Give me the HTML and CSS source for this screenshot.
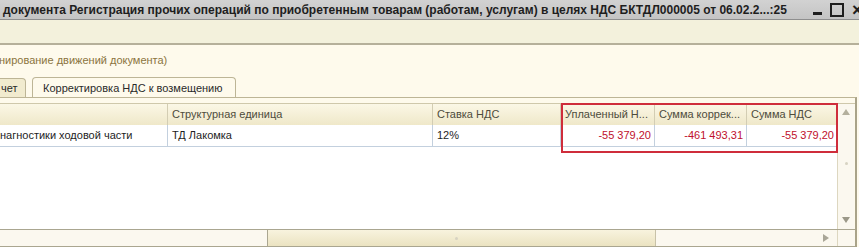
FILE: index.html
```html
<!DOCTYPE html>
<html lang="ru">
<head>
    <meta charset="UTF-8">
    <title>Регистрация прочих операций</title>
    <link rel="stylesheet" href="styles.css">
</head>
<body>
    <div class="window">
        <div class="titlebar">
            <span class="title">документа Регистрация прочих операций по приобретенным товарам (работам, услугам) в целях НДС БКТДЛ000005 от 06.02.2...:25</span>
            <div class="controls">
                <span class="ctl-min"></span>
                <span class="ctl-max"></span>
                <span class="ctl-close">×</span>
            </div>
        </div>
        <div class="toolbar"></div>
        <div class="form">
            <div class="hint">нирование движений документа)</div>
            <div class="tabs">
                <div class="tab">чет</div>
                <div class="tab active">Корректировка НДС к возмещению</div>
            </div>
        </div>
        <div class="panel">
            <div class="grid-wrap">
                <div class="grid">
                    <div class="row head">
                        <div class="cell c1"></div>
                        <div class="cell c2">Структурная единица</div>
                        <div class="cell c3">Ставка НДС</div>
                        <div class="cell c4">Уплаченный Н...</div>
                        <div class="cell c5">Сумма коррек...</div>
                        <div class="cell c6">Сумма НДС</div>
                    </div>
                    <div class="row data">
                        <div class="cell c1">нагностики ходовой части</div>
                        <div class="cell c2">ТД Лакомка</div>
                        <div class="cell c3">12%</div>
                        <div class="cell c4 num">-55 379,20</div>
                        <div class="cell c5 num">-461 493,31</div>
                        <div class="cell c6 num">-55 379,20</div>
                    </div>
                    <div class="grid-body"></div>
                </div>
                <div class="vscroll">
                    <span class="arrow up"></span>
                    <span class="vthumb"><span class="grip"></span></span>
                    <span class="arrow down"></span>
                </div>
            </div>
            <div class="hscroll">
                <div class="hleft"></div>
                <div class="hthumb"><span class="grip"></span></div>
                <div class="hright"><span class="arrow right"></span></div>
                <div class="corner"></div>
            </div>
            <div class="mark"></div>
        </div>
    </div>
</body>
</html>
```

FILE: styles.css
```css
body {
    margin: 0;
    width: 859px;
    height: 247px;
    overflow: hidden;
    font-family: "Liberation Sans", Arial, sans-serif;
    font-size: 11px;
    background-color: #fefaec;
}
.window {
    display: flex;
    flex-direction: column;
    height: 247px;
}
.titlebar {
    height: 20px;
    display: flex;
    align-items: center;
    justify-content: space-between;
    background: linear-gradient(#d2d2d2, #c4c4c4);
    border-bottom: 1px solid #8e8e8e;
    box-sizing: border-box;
}
.title {
    font-weight: bold;
    font-size: 12px;
    color: #1e1e1e;
    padding-left: 3px;
    white-space: nowrap;
}
.controls {
    display: flex;
    align-items: center;
    gap: 8px;
    width: 46px;
    overflow: hidden;
}
.ctl-min {
    flex: none;
    width: 9px;
    height: 3px;
    background: #1e1e1e;
    margin-top: 8px;
}
.ctl-max {
    flex: none;
    width: 10px;
    height: 10px;
    border: 2px solid #1e1e1e;
}
.ctl-close {
    flex: none;
    font-size: 18px;
    font-weight: bold;
    color: #1e1e1e;
    line-height: 14px;
}
.toolbar {
    height: 25px;
    background: #f3f1dc;
    border-bottom: 2px solid #b5b09a;
    box-sizing: border-box;
}
.form {
    height: 52px;
    display: flex;
    flex-direction: column;
    justify-content: space-between;
    background: #fefaec;
}
.hint {
    color: #8b7440;
    padding-top: 9px;
    margin-left: -1px;
}
.tabs {
    display: flex;
    align-items: flex-end;
    gap: 6px;
    margin-left: -1px;
}
.tab {
    height: 19px;
    line-height: 19px;
    width: 27px;
    box-sizing: border-box;
    padding-left: 1px;
    background: #f1ebcf;
    border: 1px solid #bdb596;
    border-bottom: none;
    border-radius: 0 4px 0 0;
    color: #2a2a2a;
}
.tab.active {
    width: 204px;
    height: 20px;
    line-height: 21px;
    padding-left: 10px;
    background: #fefaec;
    border-radius: 4px 4px 0 0;
}
.panel {
    position: relative;
    flex: 1;
    border-top: 1px solid #bdb596;
    border-right: 2px solid #a9a389;
    margin-right: 2px;
    padding-top: 5px;
    display: flex;
    flex-direction: column;
}
.grid-wrap {
    flex: 1;
    display: flex;
    border-top: 1px solid #cfc8ab;
}
.grid {
    width: 837px;
    display: flex;
    flex-direction: column;
    background: #ffffff;
}
.row {
    display: flex;
    height: 21px;
}
.row.head {
    background: linear-gradient(#fbf7e6, #efe8c9);
    color: #4e4c3c;
}
.row.data {
    border-bottom: 1px solid #c3d0de;
    color: #1e1e1e;
}
.cell {
    box-sizing: border-box;
    padding: 0 4px;
    line-height: 21px;
    white-space: nowrap;
    overflow: hidden;
    border-right: 1px solid #d3cdb3;
}
.row.data .cell {
    border-right-color: #c3d0de;
}
.c1 { width: 168px; padding-left: 0; }
.c2 { width: 265px; }
.c3 { width: 128px; }
.c4 { width: 94px; }
.c5 { width: 92px; }
.c6 { width: 90px; border-right: none; }
.num {
    text-align: right;
    color: #c0102c;
    padding-right: 3px;
}
.grid-body {
    flex: 1;
}
.vscroll {
    width: 16px;
    display: flex;
    flex-direction: column;
    align-items: center;
    background: #fbf8ef;
    border-left: 1px solid #ddd7c0;
}
.arrow {
    width: 0;
    height: 0;
    border: 4px solid transparent;
}
.arrow.up {
    border-bottom: 6px solid #b4b09e;
    border-top: none;
    margin: 5px 0 4px;
}
.arrow.down {
    border-top: 6px solid #9b9888;
    border-bottom: none;
    margin: 4px 0 6px;
}
.arrow.right {
    border-left: 6px solid #a9a697;
    border-right: none;
}
.vthumb {
    flex: 1;
    align-self: stretch;
    display: flex;
    align-items: center;
    justify-content: center;
    padding-bottom: 6px;
}
.grip {
    width: 3px;
    height: 3px;
    border-radius: 50%;
    background: #d7d3c2;
}
.hscroll {
    height: 16px;
    display: flex;
    border-top: 1px solid #aaa690;
    border-bottom: 1px solid #aaa690;
    background: #fbf8ef;
}
.hleft {
    width: 267px;
    border-right: 1px solid #aaa690;
}
.hthumb {
    width: 388px;
    display: flex;
    align-items: center;
    justify-content: center;
    background: linear-gradient(#f8f3de, #ebe3c1);
    border-right: 1px solid #c8c2a8;
    padding-right: 10px;
    box-sizing: border-box;
}
.hright {
    width: 181px;
    display: flex;
    align-items: center;
    justify-content: flex-end;
    padding-right: 8px;
    box-sizing: border-box;
}
.corner {
    width: 17px;
    border-left: 1px solid #ddd7c0;
}
.mark {
    position: absolute;
    left: 561px;
    top: 5px;
    width: 277px;
    height: 50px;
    box-sizing: border-box;
    border: 2px solid #cf2d3b;
}
```
